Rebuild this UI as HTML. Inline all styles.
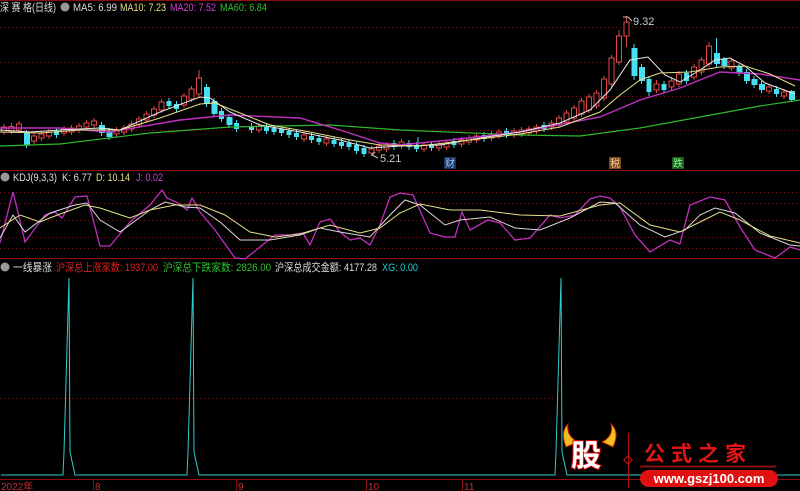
<!DOCTYPE html>
<html><head><meta charset="utf-8"><style>
html,body{margin:0;padding:0;background:#000;width:800px;height:491px;overflow:hidden}
svg{display:block}
text{font-family:"Liberation Sans","Noto Sans CJK SC",sans-serif}
.r{fill:#000;stroke:#e04848}
.c{fill:#48e0f0}
</style></head><body>
<svg width="800" height="491" viewBox="0 0 800 491" xmlns="http://www.w3.org/2000/svg">
<rect width="800" height="491" fill="#000"/>
<g stroke="#7a1010" stroke-width="1" stroke-dasharray="1,3">
<line x1="0" y1="27.5" x2="800" y2="27.5"/><line x1="0" y1="62.5" x2="800" y2="62.5"/><line x1="0" y1="96.5" x2="800" y2="96.5"/><line x1="0" y1="130.5" x2="800" y2="130.5"/>
<line x1="0" y1="192.5" x2="800" y2="192.5"/><line x1="0" y1="203.5" x2="800" y2="203.5"/><line x1="0" y1="220.5" x2="800" y2="220.5"/><line x1="0" y1="237.5" x2="800" y2="237.5"/><line x1="0" y1="248.5" x2="800" y2="248.5"/>
<line x1="0" y1="398.5" x2="555" y2="398.5"/>
</g>
<line x1="0" y1="0.5" x2="800" y2="0.5" stroke="#8a1010"/>
<line x1="0" y1="170.5" x2="800" y2="170.5" stroke="#8a1010"/>
<line x1="0" y1="258.5" x2="800" y2="258.5" stroke="#8a1010"/>
<line x1="0" y1="479.5" x2="800" y2="479.5" stroke="#8a1010"/>

<!-- wicks -->
<path stroke="#e04848" fill="none" d="M4 124V135M11.5 123V134M19 121V133M34 133V144M41.5 131V141M49 129V139M64 126V136M71.5 125V135M79 123V133M86.5 120V130M94 118V128M116.5 127V137M124 125V135M131.5 121V132M139 116V128M146.5 111V123M154 106V118M161.5 99V113M184 93V108M191.5 86V102M199 70V97M259 123V133M304 132V142M326.5 136V146M371.5 146V156M379 143V153M386.5 142V152M401.5 139V149M424 142V152M439 141V151M446.5 140V150M461.5 137V147M469 135V145M476.5 133V143M491.5 131V141M499 129V139M514 128V138M521.5 127V137M529 126V136M536.5 124V134M551.5 120V130M559 115V128M566.5 110V125M574 105V121M581.5 98V117M589 94V113M596.5 90V109M604 76V101M611.5 55V87M619 30V65M626.5 16V47M656.5 80V93M671.5 77V90M679 71V87M694 64V80M701.5 57V75M709 42V67M731.5 58V71M769 84V94M784 89V99"/>
<path stroke="#48e0f0" fill="none" d="M26.5 130V148M56.5 128V138M101.5 122V136M109 128V140M169 98V109M176.5 101V112M206.5 84V107M214 98V117M221.5 108V122M229 114V128M236.5 120V132M251.5 123V133M266.5 124V134M274 125V135M281.5 126V136M289 128V138M296.5 130V140M311.5 133V143M319 135V145M334 137V147M341.5 139V149M349 140V150M356.5 142V154M364 145V157M394 140V150M409 140V150M416.5 142V152M431.5 141V151M454 138V148M484 132V142M506.5 128V138M544 122V132M634 44V80M641.5 64V84M649 76V96M664 81V93M686.5 70V84M716.5 38V67M724 57V69M739 64V76M746.5 69V84M754 76V88M761.5 81V93M776.5 86V97M791.5 90V102M418 147V137"/>
<!-- red bodies -->
<g class="r">
<rect x="1.5" y="127" width="5" height="5"/><rect x="9" y="126.5" width="5" height="5"/><rect x="16.5" y="124" width="5" height="6"/><rect x="31.5" y="136" width="5" height="5"/><rect x="39" y="134" width="5" height="4"/><rect x="46.5" y="132" width="5" height="4"/><rect x="61.5" y="129" width="5" height="4"/><rect x="69" y="128" width="5" height="4"/><rect x="76.5" y="126" width="5" height="4"/><rect x="84" y="123" width="5" height="4"/><rect x="91.5" y="121" width="5" height="4"/><rect x="114" y="130" width="5" height="4"/><rect x="121.5" y="128" width="5" height="4"/><rect x="129" y="124" width="5" height="5"/><rect x="136.5" y="119" width="5" height="6"/><rect x="144" y="114" width="5" height="6"/><rect x="151.5" y="109" width="5" height="6"/><rect x="159" y="102" width="5" height="8"/><rect x="181.5" y="96" width="5" height="9"/><rect x="189" y="89" width="5" height="10"/><rect x="196.5" y="78" width="5" height="16"/>
<rect x="256.5" y="126" width="5" height="4"/><rect x="301.5" y="135" width="5" height="4"/><rect x="324" y="139" width="5" height="4"/><rect x="369" y="149" width="5" height="4"/><rect x="376.5" y="146" width="5" height="4"/><rect x="384" y="145" width="5" height="4"/><rect x="399" y="142" width="5" height="4"/><rect x="421.5" y="145" width="5" height="4"/><rect x="436.5" y="144" width="5" height="4"/><rect x="444" y="143" width="5" height="4"/><rect x="459" y="140" width="5" height="4"/><rect x="466.5" y="138" width="5" height="4"/><rect x="474" y="136" width="5" height="4"/><rect x="489" y="134" width="5" height="4"/><rect x="496.5" y="132" width="5" height="4"/><rect x="511.5" y="131" width="5" height="4"/><rect x="519" y="130" width="5" height="4"/><rect x="526.5" y="129" width="5" height="4"/><rect x="534" y="127" width="5" height="4"/><rect x="549" y="123" width="5" height="4"/>
<rect x="556.5" y="118" width="5" height="7"/><rect x="564" y="113" width="5" height="9"/><rect x="571.5" y="108" width="5" height="10"/><rect x="579" y="101" width="5" height="13"/><rect x="586.5" y="97" width="5" height="13"/><rect x="594" y="93" width="5" height="13"/><rect x="601.5" y="79" width="5" height="19"/><rect x="609" y="58" width="5" height="26"/><rect x="616.5" y="36" width="5" height="26"/><rect x="624" y="22" width="5" height="14"/>
<rect x="654" y="84" width="5" height="6"/><rect x="669" y="81" width="5" height="6"/><rect x="676.5" y="74" width="5" height="10"/><rect x="691.5" y="67" width="5" height="10"/><rect x="699" y="60" width="5" height="12"/><rect x="706.5" y="46" width="5" height="18"/><rect x="729" y="61" width="5" height="7"/><rect x="766.5" y="87" width="5" height="4"/><rect x="781.5" y="92" width="5" height="4"/>
</g>
<g class="c">
<rect x="24" y="133" width="6" height="12"/><rect x="54" y="131" width="5" height="4"/><rect x="99" y="125" width="6" height="8"/><rect x="106.5" y="131" width="6" height="6"/><rect x="166.5" y="101" width="5" height="5"/><rect x="174" y="104" width="5" height="5"/><rect x="204" y="87" width="6" height="17"/><rect x="211.5" y="101" width="6" height="13"/><rect x="219" y="111" width="5" height="8"/><rect x="226.5" y="117" width="6" height="8"/><rect x="234" y="123" width="5" height="6"/><rect x="249" y="126" width="5" height="4"/><rect x="264" y="127" width="5" height="4"/><rect x="271.5" y="128" width="5" height="4"/><rect x="279" y="129" width="5" height="4"/><rect x="286.5" y="131" width="5" height="4"/><rect x="294" y="133" width="5" height="4"/><rect x="309" y="136" width="5" height="4"/><rect x="316.5" y="138" width="5" height="4"/><rect x="331.5" y="140" width="5" height="4"/><rect x="339" y="142" width="5" height="4"/><rect x="346.5" y="143" width="5" height="4"/><rect x="354" y="145" width="5" height="6"/><rect x="361.5" y="148" width="5" height="6"/><rect x="391.5" y="143" width="5" height="4"/><rect x="406.5" y="143" width="5" height="4"/><rect x="414" y="145" width="5" height="4"/><rect x="429" y="144" width="5" height="4"/><rect x="451.5" y="141" width="5" height="4"/><rect x="481.5" y="135" width="5" height="4"/><rect x="504" y="131" width="5" height="4"/><rect x="541.5" y="125" width="5" height="4"/>
<rect x="631.5" y="48" width="6" height="28"/><rect x="639" y="67" width="6" height="14"/><rect x="646.5" y="79" width="5" height="13"/><rect x="661.5" y="84" width="5" height="6"/><rect x="684" y="73" width="5" height="8"/><rect x="714" y="53" width="6" height="11"/><rect x="721.5" y="59" width="6" height="7"/><rect x="736.5" y="66" width="6" height="7"/><rect x="744" y="72" width="6" height="9"/><rect x="751.5" y="79" width="6" height="6"/><rect x="759" y="84" width="6" height="6"/><rect x="774" y="89" width="5" height="5"/><rect x="789" y="91" width="6" height="9"/>
</g>
<g fill="none">
<polyline stroke="#2eb82e" stroke-width="1.2" points="0,146 60,144 150,133 230,127 330,125 400,130 520,135 580,136 640,128 700,117 760,106 800,100"/>
<polyline stroke="#c030c0" stroke-width="1.4" points="0,128 60,128 110,132 180,120 230,115 300,118 340,130 380,143 400,145 450,140 520,132 600,117 640,100 680,88 720,72 760,74 800,80"/>
<polyline stroke="#e8e8e8" points="0,130 30,132 60,130 100,128 120,130 160,112 200,97 210,98 230,112 260,125 300,132 340,140 370,148 400,146 440,145 480,138 520,132 560,123 590,110 610,90 630,60 648,57 665,75 680,82 700,70 715,60 730,58 745,66 765,83 795,94"/>
<polyline stroke="#e6e08a" points="0,132 40,133 80,130 120,130 160,118 200,104 215,103 240,113 270,125 310,132 350,140 380,145 420,146 470,140 520,134 560,127 600,112 620,95 640,80 660,73 690,72 720,67 745,66 770,74 795,86"/>
<polyline stroke="#c030c0" stroke-width="1.3" points="0,243 13,192 25,242 45,215 55,212 62,218 75,197 87,196 100,246 110,246 130,222 150,205 162,190 167,198 178,203 187,210 192,198 200,212 215,230 235,258 245,259 275,235 290,235 303,233 310,245 320,222 330,219 340,232 350,240 360,238 370,245 380,225 390,197 400,193 413,195 430,233 445,237 455,237 462,212 470,230 488,220 500,223 515,240 530,238 550,215 560,218 575,215 590,199 600,196 610,198 620,207 635,235 650,252 670,240 680,244 690,205 710,197 725,200 740,227 755,250 775,258 790,247 800,250"/>
<polyline stroke="#d8d8d8" points="0,238 13,215 25,232 50,213 75,205 87,203 100,220 120,232 150,210 165,202 185,207 200,208 220,222 240,240 270,240 300,235 320,228 340,232 370,237 390,215 405,200 420,205 445,225 460,220 490,217 515,228 540,230 570,218 600,202 615,203 640,225 665,237 685,230 700,215 715,208 735,213 760,233 790,245 800,246"/>
<polyline stroke="#e6e08a" points="0,228 20,215 40,222 60,214 85,205 100,208 130,218 150,210 175,205 200,205 225,215 250,232 275,237 300,234 330,225 360,233 380,228 400,213 420,204 450,210 480,210 520,215 560,216 600,205 620,203 650,225 680,232 700,222 720,212 740,220 770,236 800,243"/>
</g>
<!-- header main -->
<text x="0" y="11" font-size="11" fill="#ddd" textLength="56" lengthAdjust="spacingAndGlyphs">深 赛 格(日线)</text>
<circle cx="65" cy="7" r="4.5" fill="#999"/>
<text x="73" y="11" font-size="11" fill="#ddd" textLength="44" lengthAdjust="spacingAndGlyphs">MA5: 6.99</text>
<text x="120" y="11" font-size="11" fill="#e6e08a" textLength="46" lengthAdjust="spacingAndGlyphs">MA10: 7.23</text>
<text x="170" y="11" font-size="11" fill="#d040d0" textLength="46" lengthAdjust="spacingAndGlyphs">MA20: 7.52</text>
<text x="220" y="11" font-size="11" fill="#30c030" textLength="47" lengthAdjust="spacingAndGlyphs">MA60: 6.84</text>
<text x="633" y="25" font-size="11" fill="#ccc">9.32</text>
<path d="M623 17 L628 17 L632 21" stroke="#ccc" fill="none"/>
<text x="380" y="162" font-size="11" fill="#ccc">5.21</text>
<path d="M372 155 L378 158 M372 155 L375 152" stroke="#ccc" fill="none"/>
<rect x="444" y="157" width="12" height="12" fill="#1b3560"/><text x="445" y="167" font-size="10" fill="#9cf">财</text>
<rect x="609" y="157" width="12" height="12" fill="#7a4a20"/><text x="610" y="167" font-size="10" fill="#fc9">税</text>
<rect x="672" y="157" width="12" height="12" fill="#1f5a20"/><text x="673" y="167" font-size="10" fill="#8f8">跌</text>
<!-- KDJ header -->
<circle cx="5" cy="177" r="4.5" fill="#999"/>
<text x="13" y="181" font-size="11" fill="#ddd" textLength="44" lengthAdjust="spacingAndGlyphs">KDJ(9,3,3)</text>
<text x="62" y="181" font-size="11" fill="#ddd" textLength="30" lengthAdjust="spacingAndGlyphs">K: 6.77</text>
<text x="96" y="181" font-size="11" fill="#e6e08a" textLength="34" lengthAdjust="spacingAndGlyphs">D: 10.14</text>
<text x="136" y="181" font-size="11" fill="#d040d0" textLength="27" lengthAdjust="spacingAndGlyphs">J: 0.02</text>
<!-- third header -->
<circle cx="5" cy="267" r="4.5" fill="#999"/>
<text x="13" y="271" font-size="11" fill="#ddd" textLength="39" lengthAdjust="spacingAndGlyphs">一线暴涨</text>
<text x="56" y="271" font-size="11" fill="#e02020" textLength="102" lengthAdjust="spacingAndGlyphs">沪深总上涨家数: 1937.00</text>
<text x="163" y="271" font-size="11" fill="#30c030" textLength="108" lengthAdjust="spacingAndGlyphs">沪深总下跌家数: 2826.00</text>
<text x="275" y="271" font-size="11" fill="#ddd" textLength="102" lengthAdjust="spacingAndGlyphs">沪深总成交金额: 4177.28</text>
<text x="382" y="271" font-size="11" fill="#2cc" textLength="36" lengthAdjust="spacingAndGlyphs">XG: 0.00</text>
<path d="M1 475 L63 475 L64 452 L69 278 L70 452 L75 475 L187 475 L188 452 L193 278 L194 452 L199 475 L555 475 L556 452 L561 278 L562 452 L567 475 L800 475" stroke="#3cc" fill="none"/>
<!-- axis -->
<g stroke="#8a1010"><line x1="93.5" y1="479" x2="93.5" y2="491"/><line x1="236.5" y1="479" x2="236.5" y2="491"/><line x1="366.5" y1="479" x2="366.5" y2="491"/><line x1="462.5" y1="479" x2="462.5" y2="491"/></g>
<g font-size="10" fill="#c03030"><text x="1" y="490">2022年</text><text x="95" y="490">8</text><text x="238" y="490">9</text><text x="368" y="490">10</text><text x="464" y="490">11</text></g>
<!-- logo -->
<g>
<path d="M566 447 Q560 432 568 424 Q566 436 578 442 Z" fill="#f0c020" stroke="#d02000"/>
<path d="M613 447 Q620 432 611 424 Q614 436 602 442 Z" fill="#f0c020" stroke="#d02000"/>
<text x="571" y="466" font-size="30" font-weight="bold" fill="#fff" stroke="#e01010" stroke-width="2" paint-order="stroke" font-family="Noto Sans CJK SC,sans-serif">股</text>
<line x1="628.5" y1="433" x2="628.5" y2="488" stroke="#b01010"/>
<rect x="625" y="457" width="6" height="6" transform="rotate(45 628 460)" fill="none" stroke="#d01010"/>
<text x="644" y="461" font-size="21" font-weight="bold" fill="#e01515" letter-spacing="6" font-family="Noto Sans CJK SC,sans-serif">公式之家</text>
<line x1="640" y1="466.5" x2="776" y2="466.5" stroke="#8a1010" stroke-width="2"/>
<rect x="640" y="470" width="138" height="17" rx="8.5" fill="#e01010"/>
<text x="709" y="483" font-size="13" font-weight="bold" fill="#fff" text-anchor="middle">www.gszj100.com</text>
</g>
</svg>
</body></html>
